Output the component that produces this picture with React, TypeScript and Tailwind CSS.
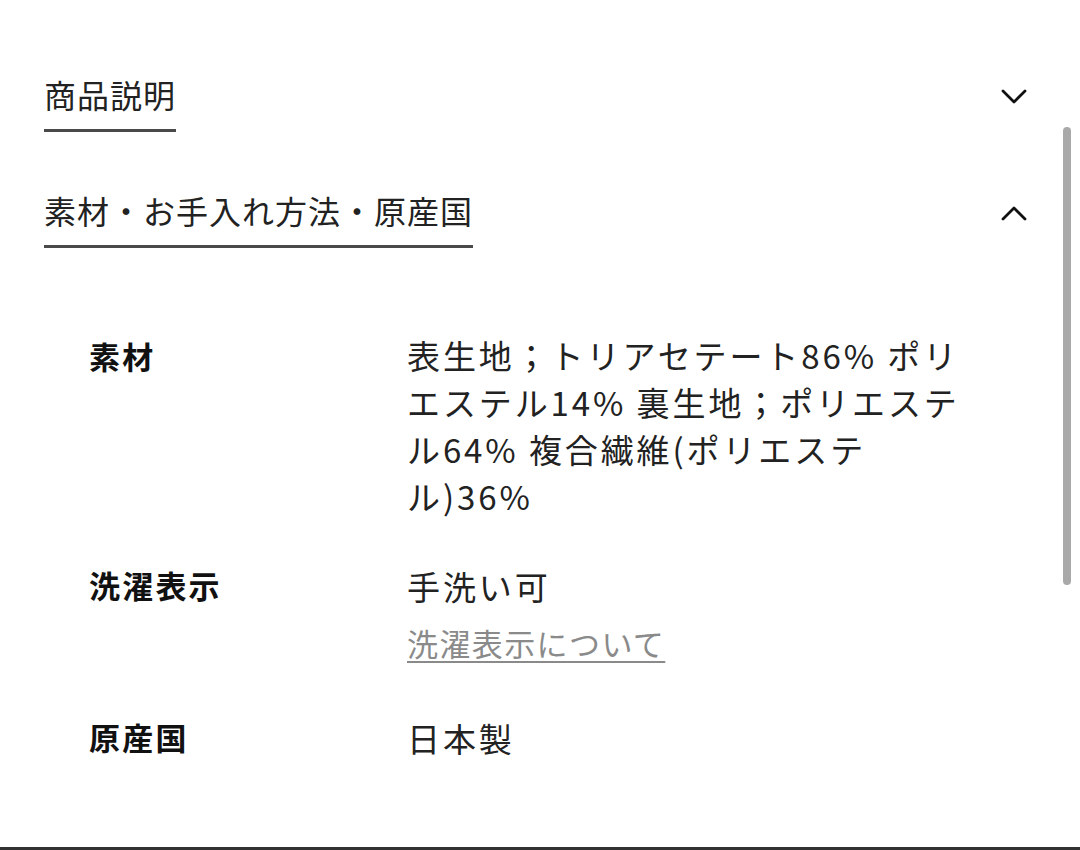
import type { ReactNode } from "react"

const font = { fontFamily: '"Noto Sans CJK JP", "Noto Sans", sans-serif' }

function Chevron({ up }: { up?: boolean }) {
  return (
    <svg width="26" height="16" viewBox="0 0 26 16" fill="none" className="shrink-0">
      <path
        d={up ? "M2 14 L13 3 L24 14" : "M2 2 L13 13 L24 2"}
        stroke="#111"
        strokeWidth="2.8"
        strokeLinecap="round"
        strokeLinejoin="round"
      />
    </svg>
  )
}

function SectionHeader({ title, open }: { title: string; open?: boolean }) {
  return (
    <div className="flex items-start justify-between pl-[44px] pr-[53px]">
      <h2 className="inline-block border-b-[3px] border-[#4a4a4a] pb-[15px] text-[32px] leading-[40px] tracking-[1px] text-[#222]">
        {title}
      </h2>
      <div className="mt-[15px]">
        <Chevron up={open} />
      </div>
    </div>
  )
}

function Row({ label, className, children }: { label: string; className?: string; children: ReactNode }) {
  return (
    <div className={`grid grid-cols-[318px_1fr] ${className ?? ""}`}>
      <div className="text-[31px] font-bold leading-[47px] tracking-[2.2px] text-[#111]">{label}</div>
      <div className="text-[33px] leading-[47px] tracking-[2.9px] text-[#222]">{children}</div>
    </div>
  )
}

export default function App() {
  return (
    <div style={font} className="relative flex h-[850px] flex-col overflow-hidden border-b-[3px] border-[#333] bg-white">
      <div className="pt-[74px]">
        <SectionHeader title="商品説明" />
      </div>
      <div className="pt-[58px]">
        <SectionHeader title="素材・お手入れ方法・原産国" open />
      </div>

      <div className="flex flex-col pl-[89px] pt-[84px]">
        <Row label="素材">
          <span className="block">表生地；トリアセテート86% ポリ</span>
          <span className="block">エステル14% 裏生地；ポリエステ</span>
          <span className="block">ル64% 複合繊維(ポリエステ</span>
          <span className="block">ル)36%</span>
        </Row>
        <Row label="洗濯表示" className="mt-[41px]">
          <div className="pt-[2px]">手洗い可</div>
          <a
            href="#"
            className="mt-[9px] inline-block text-[31px] tracking-[1.4px] text-[#8a8a8a] underline decoration-[2px] underline-offset-[5px]"
          >
            洗濯表示について
          </a>
        </Row>
        <Row label="原産国" className="mt-[47px]">
          <div className="pt-[2px]">日本製</div>
        </Row>
      </div>

      {/* overlay scrollbar */}
      <div className="absolute left-[1063px] top-[127px] h-[458px] w-[8px] rounded-full bg-[#a9a9a9]" />
    </div>
  )
}
